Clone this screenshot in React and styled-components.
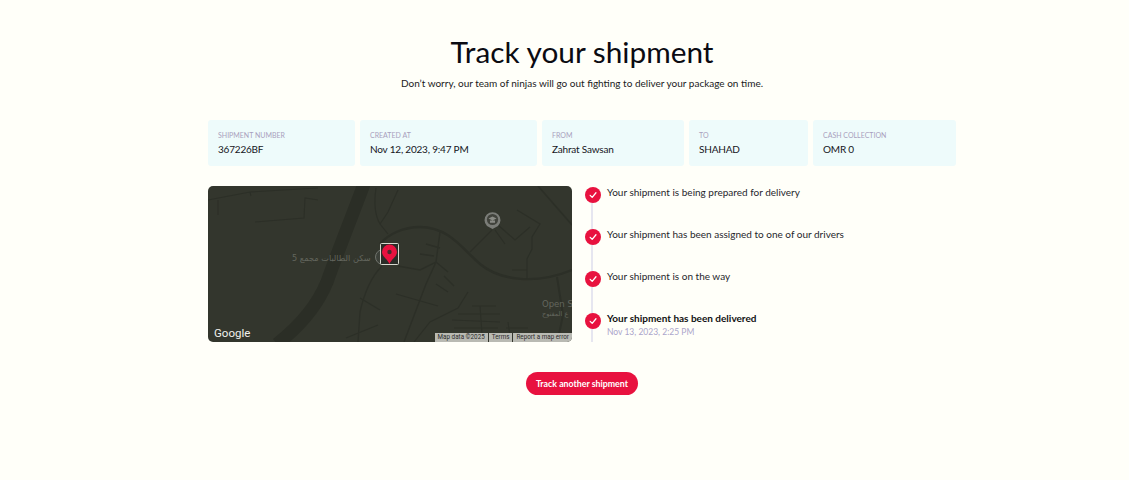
import React from "react";
import styled, { createGlobalStyle } from "styled-components";

const infoCards = [
  { label: "SHIPMENT NUMBER", value: "367226BF", width: 147 },
  { label: "CREATED AT", value: "Nov 12, 2023, 9:47 PM", width: 177 },
  { label: "FROM", value: "Zahrat Sawsan", width: 142 },
  { label: "TO", value: "SHAHAD", width: 119 },
  { label: "CASH COLLECTION", value: "OMR 0", width: 143 },
];

const steps = [
  { text: "Your shipment is being prepared for delivery" },
  { text: "Your shipment has been assigned to one of our drivers" },
  { text: "Your shipment is on the way" },
  {
    text: "Your shipment has been delivered",
    date: "Nov 13, 2023, 2:25 PM",
    current: true,
  },
];

const MapDrawing = () => (
  <MapSvg viewBox="0 0 364 156">
    <rect width="364" height="156" fill="#33362d" />
    <g fill="none" stroke="#2c2f27">
      <path
        d="M156 -2 C148 20 128 70 119 96 C110 118 92 140 69 158"
        strokeWidth="13"
        stroke="#2b2e26"
      />
      <path
        d="M172 58 C180 48 196 41 212 41 C240 41 254 62 272 78 C290 93 325 100 364 84"
        strokeWidth="2.4"
      />
      <path d="M349 91 L355 129 L350 153" strokeWidth="2" />
      <path d="M330 0 L364 39" strokeWidth="1.6" />
      <path d="M309 24 L332 38 L324 51 L324 63 L319 73 L319 93" strokeWidth="1.2" />
      <path d="M290 39 L307 54 L322 41" strokeWidth="1.2" />
      <path d="M284 44 L262 66 M287 44 L297 58" strokeWidth="1.2" />
      <path d="M0 14 L42 6 L110 2 M10 14 L10 29 M47 36 L96 32 L97 12 L110 14 M42 6 L43 10" strokeWidth="1.1" />
      <path d="M168 2 C166 16 166 28 172 38 L180 48 M190 4 L180 26 L172 38" strokeWidth="1.2" />
      <path
        d="M174 80 C162 92 156 108 152 126 L150 156 M152 112 L172 124 M170 139 L138 152"
        strokeWidth="1.3"
      />
      <path
        d="M232 46 L228 76 L218 98 L196 156 M190 80 L212 84 L228 76 L240 86 M212 68 L226 70 M218 58 L232 62 M236 90 L246 100 M228 98 L240 106"
        strokeWidth="1.4"
      />
      <path d="M188 108 L230 120 M260 106 L250 122 L222 136 L206 156" strokeWidth="1.2" />
      <path d="M264 120 L288 120 M250 128 L292 128 M244 134 L292 136 M246 142 L290 142 M272 120 L274 148 M298 142 L320 142 M300 136 L302 150" strokeWidth="1.1" />
      <path d="M304 84 L319 84" strokeWidth="1.2" />
    </g>
    <circle cx="175" cy="71" r="7.5" fill="#3c4039" stroke="#6f736c" strokeWidth="1" />
    <MapLabel x="84" y="75" fontSize="8.2">5 سكن الطالبات مجمع</MapLabel>
    <MapLabel x="334" y="121" fontSize="8.5" direction="ltr">
      Open St
    </MapLabel>
    <MapLabel x="334" y="130" fontSize="6.5">
      ع المفتوح
    </MapLabel>
    <path d="M284.5 43 L279 40 A8 8 0 1 1 290 40 Z" fill="#7b7d78" />
    <circle cx="284.5" cy="33.5" r="5.6" fill="#41433c" />
    <path
      d="M280.5 32.5 L284.5 30.5 L288.5 32.5 L284.5 34.5 Z M282 34.5 L287 34.5 L287 36.8 L282 36.8 Z"
      fill="#8a8c86"
    />
    <rect x="172.5" y="57.5" width="18" height="21" rx="1" fill="#2a2c27" stroke="#d7d9cf" />
    <path
      d="M181.5 78 C179.5 73 174 70.5 174 66 A7.5 7.5 0 0 1 189 66 C189 70.5 183.5 73 181.5 78 Z"
      fill="#e8123f"
    />
    <circle cx="181.5" cy="66" r="2.2" fill="#4a2a2e" />
  </MapSvg>
);

const Check = () => (
  <svg width="8" height="8" viewBox="0 0 10 10" fill="none">
    <path
      d="M1.5 5.4 L4 8 L8.7 2.2"
      stroke="#fff"
      strokeWidth="1.6"
      strokeLinecap="round"
      strokeLinejoin="round"
    />
  </svg>
);

const App = () => {
  return (
    <Page>
      <GlobalStyle />
      <Content>
        <Title>Track your shipment</Title>
        <Subtitle>
          Don’t worry, our team of ninjas will go out fighting to deliver your
          package on time.
        </Subtitle>
        <InfoRow>
          {infoCards.map((card) => (
            <InfoCard key={card.label} $width={card.width}>
              <InfoLabel>{card.label}</InfoLabel>
              <InfoValue>{card.value}</InfoValue>
            </InfoCard>
          ))}
        </InfoRow>
        <Details>
          <MapBox>
            <MapDrawing />
            <GoogleMark>Google</GoogleMark>
            <Attribution>
              <AttributionItem>Map data ©2025</AttributionItem>
              <AttributionItem>Terms</AttributionItem>
              <AttributionItem>Report a map error</AttributionItem>
            </Attribution>
          </MapBox>
          <Timeline>
            {steps.map((step) => (
              <Step key={step.text}>
                <StepDot>
                  <Check />
                </StepDot>
                <StepBody>
                  <StepText $current={step.current}>{step.text}</StepText>
                  {step.date && <StepDate>{step.date}</StepDate>}
                </StepBody>
              </Step>
            ))}
          </Timeline>
        </Details>
        <TrackButton>Track another shipment</TrackButton>
      </Content>
    </Page>
  );
};

const GlobalStyle = createGlobalStyle`
  html, body {
    margin: 0;
    padding: 0;
    background: #fffff9;
  }
  body {
    font-family: Lato, "Noto Sans", sans-serif;
    color: #111;
  }
`;

const Page = styled.main`
  padding: 33px 0 0 35px;
`;

const Content = styled.div`
  width: 748px;
  margin: 0 auto;
  display: flex;
  flex-direction: column;
  align-items: center;
`;

const Title = styled.h1`
  margin: 0;
  font-size: 29.8px;
  line-height: 38px;
  font-weight: 400;
  color: #0b0b12;
`;

const Subtitle = styled.p`
  margin: 4px 0 0;
  font-size: 10px;
  line-height: 16px;
  color: #1a1a22;
`;

const InfoRow = styled.div`
  width: 100%;
  display: flex;
  justify-content: space-between;
  margin-top: 29px;
`;

const InfoCard = styled.div`
  width: ${(props) => props.$width}px;
  height: 46px;
  box-sizing: border-box;
  padding: 10px 10px 0;
  background: #eefbfb;
  border-radius: 3px;
`;

const InfoLabel = styled.div`
  font-size: 7px;
  line-height: 10px;
  color: #a99fbd;
`;

const InfoValue = styled.div`
  margin-top: 2px;
  font-size: 10px;
  line-height: 14px;
  letter-spacing: -0.2px;
  color: #15151c;
`;

const Details = styled.div`
  width: 100%;
  display: flex;
  gap: 13px;
  margin-top: 20px;
`;

const MapBox = styled.div`
  position: relative;
  width: 364px;
  height: 156px;
  border-radius: 5px;
  overflow: hidden;
`;

const MapSvg = styled.svg`
  display: block;
  width: 100%;
  height: 100%;
`;

const MapLabel = styled.text`
  fill: #63665e;
  font-family: "DejaVu Sans", sans-serif;
  text-anchor: start;
`;

const GoogleMark = styled.span`
  position: absolute;
  left: 6px;
  bottom: 2px;
  font-size: 11.5px;
  line-height: 14px;
  color: #f1f1ec;
  font-family: Roboto, sans-serif;
`;

const Attribution = styled.div`
  position: absolute;
  right: 0;
  bottom: 0;
  display: flex;
  height: 9px;
  background: #b9bab3;
`;

const AttributionItem = styled.span`
  padding: 0 3px;
  font-size: 6.3px;
  line-height: 9px;
  color: #2c2c2c;
  font-family: Roboto, sans-serif;
  & + & {
    border-left: 1px solid #33352d;
  }
`;

const Timeline = styled.ol`
  flex: 1;
  margin: 0;
  padding: 0;
  list-style: none;
  display: flex;
  flex-direction: column;
  height: 156px;
  overflow: hidden;
`;

const Step = styled.li`
  position: relative;
  display: flex;
  gap: 6px;
  height: 42px;
  flex-shrink: 0;
  &::before {
    content: "";
    position: absolute;
    left: 6px;
    top: 12px;
    width: 2px;
    height: 42px;
    background: #e6e6f0;
  }
`;

const StepDot = styled.span`
  position: relative;
  width: 16px;
  height: 16px;
  margin-top: 1px;
  border-radius: 50%;
  background: #e8123f;
  display: flex;
  align-items: center;
  justify-content: center;
  flex-shrink: 0;
`;

const StepBody = styled.div`
  display: flex;
  flex-direction: column;
`;

const StepText = styled.div`
  font-size: 10px;
  line-height: 13px;
  font-weight: ${(props) => (props.$current ? 700 : 400)};
  color: ${(props) => (props.$current ? "#111" : "#26262c")};
`;

const StepDate = styled.div`
  font-size: 8.5px;
  line-height: 12px;
  margin-top: 1px;
  color: #aba5cb;
`;

const TrackButton = styled.button`
  margin-top: 30px;
  width: 112px;
  height: 23px;
  padding: 0;
  border: none;
  border-radius: 12px;
  background: #e8123f;
  color: #fff;
  font-family: inherit;
  font-size: 8.8px;
  font-weight: 700;
`;

export default App;
